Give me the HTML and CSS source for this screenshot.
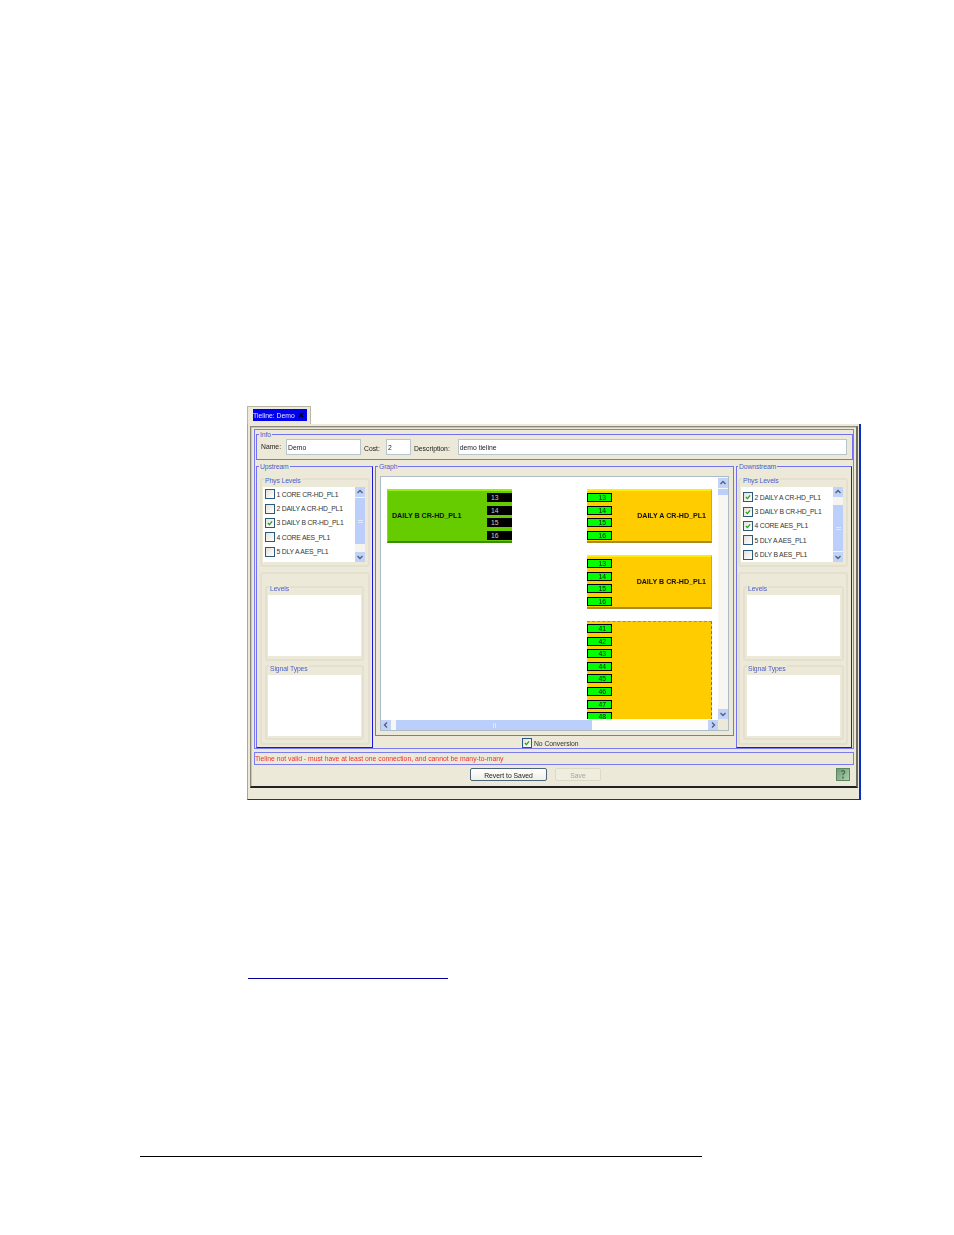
FILE: index.html
```html
<!DOCTYPE html>
<html lang="en">
<head>
<meta charset="utf-8">
<title>Tieline: Demo</title>
<link rel="stylesheet" href="styles.css">
</head>
<body>
<svg class="defs" width="0" height="0" aria-hidden="true">
  <symbol id="chk" viewBox="0 0 10 10"><path d="M2.4 5 L4.3 7 L7.6 3" fill="none" stroke="#21a121" stroke-width="1.6"/></symbol>
  <symbol id="up" viewBox="0 0 10 10"><path d="M2.5 6 L5 3.5 L7.5 6" fill="none" stroke="#4d6185" stroke-width="1.4"/></symbol>
  <symbol id="down" viewBox="0 0 10 10"><path d="M2.5 4 L5 6.5 L7.5 4" fill="none" stroke="#4d6185" stroke-width="1.4"/></symbol>
  <symbol id="left" viewBox="0 0 10 10"><path d="M6 2.5 L3.5 5 L6 7.5" fill="none" stroke="#4d6185" stroke-width="1.4"/></symbol>
  <symbol id="right" viewBox="0 0 10 10"><path d="M4 2.5 L6.5 5 L4 7.5" fill="none" stroke="#4d6185" stroke-width="1.4"/></symbol>
</svg>
<main class="page">
  <div class="window">
    <div class="tab"><div class="tab-label"><span>Tieline: Demo</span><svg class="tab-x" viewBox="0 0 6 6"><path d="M1 1 L5 5 M5 1 L1 5" stroke="#000" stroke-width="1.4"/></svg></div></div>
    <div class="frame">
      <div class="panel">
        <div class="outer">
          <section class="titled info">
            <span class="legend">Info</span>
            <label class="lab name-lab">Name:</label>
            <div class="field f-name">Demo</div>
            <label class="lab">Cost:</label>
            <div class="field f-cost">2</div>
            <label class="lab">Description:</label>
            <div class="field f-desc">demo tieline</div>
          </section>
          <div class="columns">
            <section class="titled side">
              <span class="legend">Upstream</span>
              <div class="group phys">
                <span class="glabel">Phys Levels</span>
                <div class="listwrap">
                  <ul class="list">
                    <li><span class="cb"></span>1 CORE CR-HD_PL1</li>
                    <li><span class="cb"></span>2 DAILY A CR-HD_PL1</li>
                    <li><span class="cb"><svg><use href="#chk"/></svg></span>3 DAILY B CR-HD_PL1</li>
                    <li><span class="cb"></span>4 CORE AES_PL1</li>
                    <li><span class="cb"></span>5 DLY A AES_PL1</li>
                  </ul>
                  <div class="vbar">
                    <span class="btn"><svg><use href="#up"/></svg></span>
                    <span class="thumb thumb-up"><i></i></span>
                    <span class="track"></span>
                    <span class="btn"><svg><use href="#down"/></svg></span>
                  </div>
                </div>
              </div>
              <div class="group lower">
                <div class="group sub sub-levels"><span class="glabel">Levels</span><div class="box box-l"></div></div>
                <div class="group sub sub-signal"><span class="glabel">Signal Types</span><div class="box box-s"></div></div>
              </div>
            </section>
            <div class="center">
              <section class="titled graph">
                <span class="legend">Graph</span>
                <div class="scrollpane">
                  <div class="viewport">
                    <div class="node green n1">
                      <span class="nlabel">DAILY B CR-HD_PL1</span>
                      <div class="ports"><span class="port dark">13</span><span class="port dark">14</span><span class="port dark">15</span><span class="port dark">16</span></div>
                    </div>
                    <div class="node yellow n2">
                      <div class="ports"><span class="port lit">13</span><span class="port lit">14</span><span class="port lit">15</span><span class="port lit">16</span></div>
                      <span class="nlabel">DAILY A CR-HD_PL1</span>
                    </div>
                    <div class="node yellow n3">
                      <div class="ports"><span class="port lit">13</span><span class="port lit">14</span><span class="port lit">15</span><span class="port lit">16</span></div>
                      <span class="nlabel">DAILY B CR-HD_PL1</span>
                    </div>
                    <div class="node yellow dashed n4">
                      <div class="ports"><span class="port lit">41</span><span class="port lit">42</span><span class="port lit">43</span><span class="port lit">44</span><span class="port lit">45</span><span class="port lit">46</span><span class="port lit">47</span><span class="port lit">48</span></div>
                    </div>
                  </div>
                  <div class="vbar vbar-g">
                    <span class="btn"><svg><use href="#up"/></svg></span>
                    <span class="thumb thumb-s"></span>
                    <span class="track"></span>
                    <span class="btn"><svg><use href="#down"/></svg></span>
                  </div>
                  <div class="hbar">
                    <span class="btn"><svg><use href="#left"/></svg></span>
                    <span class="htrack-a"></span>
                    <span class="hthumb"><i></i></span>
                    <span class="htrack"></span>
                    <span class="btn"><svg><use href="#right"/></svg></span>
                  </div>
                  <div class="corner"></div>
                </div>
              </section>
              <div class="noconv"><span class="cb"><svg><use href="#chk"/></svg></span>No Conversion</div>
            </div>
            <section class="titled side side-r">
              <span class="legend">Downstream</span>
              <div class="group phys">
                <span class="glabel">Phys Levels</span>
                <div class="listwrap">
                  <ul class="list list-r">
                    <li><span class="cb"><svg><use href="#chk"/></svg></span>2 DAILY A CR-HD_PL1</li>
                    <li><span class="cb"><svg><use href="#chk"/></svg></span>3 DAILY B CR-HD_PL1</li>
                    <li><span class="cb"><svg><use href="#chk"/></svg></span>4 CORE AES_PL1</li>
                    <li><span class="cb"></span>5 DLY A AES_PL1</li>
                    <li><span class="cb"></span>6 DLY B AES_PL1</li>
                  </ul>
                  <div class="vbar">
                    <span class="btn"><svg><use href="#up"/></svg></span>
                    <span class="track track-top"></span>
                    <span class="thumb thumb-dn"><i></i></span>
                    <span class="track"></span>
                    <span class="btn"><svg><use href="#down"/></svg></span>
                  </div>
                </div>
              </div>
              <div class="group lower">
                <div class="group sub sub-levels"><span class="glabel">Levels</span><div class="box box-l"></div></div>
                <div class="group sub sub-signal"><span class="glabel">Signal Types</span><div class="box box-s"></div></div>
              </div>
            </section>
          </div>
        </div>
        <div class="status">Tieline not valid - must have at least one connection, and cannot be many-to-many</div>
        <div class="actions">
          <button class="button revert" type="button">Revert to Saved</button>
          <button class="button save" type="button" disabled>Save</button>
          <span class="help"><svg viewBox="0 0 14 13"><path d="M5 3 Q7 1 9 3 Q9.5 5 7 6 L7 7.5" fill="none" stroke="#3d6b45" stroke-width="1.3"/><path d="M7 9 V11.5" stroke="#3d6b45" stroke-width="1.5"/></svg></span>
        </div>
      </div>
    </div>
  </div>
  <a class="link-line" href="#" aria-label="link"></a>
  <div class="foot-rule"></div>
</main>
</body>
</html>
```

FILE: styles.css
```css
* { box-sizing: border-box; }
html, body { margin: 0; background: #fff; }
body { font-family: "Liberation Sans", Arial, sans-serif; font-size: 6.8px; color: #222; }
.defs { position: absolute; }
.page { height: 1235px; padding-top: 406px; overflow: hidden; }

.window { width: 614px; margin-left: 247px; filter: blur(0.28px); }
.tab { width: 64px; height: 18px; background: #ece9d8; border: 1px solid #b8b6a6; border-bottom: 0; padding: 2px 3px 0 5px; }
.tab-label { height: 12px; background: #0000f0; color: #e6e6ff; display: flex; justify-content: space-between; align-items: center; padding: 0 3px 0 0; }
.tab-x { width: 6px; height: 6px; display: block; }

.frame { height: 376px; background: #ece9d8; border-left: 1px solid #a8a698; border-right: 2px solid #0a2fc0; border-bottom: 1px solid #0a2fc0; padding: 2px 2px 0 2px; }
.panel { width: 608px; height: 362px; border: 1px solid #8a887c; border-right: 2px solid #6e6c62; border-bottom: 2px solid #222; box-shadow: inset 1px 1px 0 #c8c6b8; padding: 2px 2px 0 3px; }

.outer { width: 600px; height: 320px; border: 1px solid #7c7cf2; padding: 4px 1px 0 1px; }
.titled { position: relative; border: 1px solid #7272ee; }
.legend { position: absolute; top: -4px; left: 2px; background: #ece9d8; color: #4a5fc8; padding: 0 1px; line-height: 8px; letter-spacing: -0.1px; }
.side-r .legend { left: 1px; }

.info { width: 597px; height: 26px; display: flex; align-items: center; padding: 0 0 0 4px; margin-bottom: 6px; }
.lab { color: #222; margin-top: 2px; }
.name-lab { margin-top: -2px; }
.field { height: 16px; background: #fff; border: 1px solid #b8c6cc; line-height: 16px; padding-left: 1px; color: #222; }
.f-name { width: 75px; margin: 0 3px 0 5px; }
.f-cost { width: 25px; margin: 0 3px 0 6px; }
.f-desc { width: 389px; margin-left: 8px; }

.columns { display: flex; gap: 2px; }
.side { width: 117px; height: 282px; border-right-color: #1a1ad8; border-bottom-color: #1a1ad8; padding: 11px 0 0 3px; }
.side-r { width: 116px; margin-left: 0; padding-left: 1px; }
.center { width: 359px; }

.group { position: relative; border: 2px solid #e3e0cf; border-radius: 3px; }
.glabel { position: absolute; top: -3px; left: 2px; background: #ece9d8; color: #4a5fc8; padding: 0 1px; line-height: 8px; white-space: nowrap; letter-spacing: -0.1px; }
.phys { width: 110px; height: 89px; padding: 7px 0 0 1px; }
.listwrap { display: flex; height: 75px; }
.list { list-style: none; margin: 0; padding: 0; width: 92px; height: 75px; background: #fff; }
.list li { height: 14.4px; display: flex; align-items: center; padding-left: 2px; white-space: nowrap; color: #333; letter-spacing: -0.2px; }
.list-r { padding-top: 3px; }
.cb { flex: none; width: 10px; height: 10px; margin-right: 1.5px; border: 1px solid #2d5a7c; background: linear-gradient(135deg, #e4e2d8, #fff); display: block; }
.cb svg { display: block; width: 8px; height: 8px; }

.vbar { width: 10px; height: 75px; display: flex; flex-direction: column; background: #f5f4ef; }
.btn { flex: none; display: block; width: 10px; height: 10px; background: #c3d3f8; }
.btn svg { display: block; width: 10px; height: 10px; }
.thumb { display: flex; align-items: center; justify-content: center; background: #bccffa; flex: none; }
.thumb i { display: block; width: 5px; height: 3px; border-top: 1px solid #dfe8fc; border-bottom: 1px solid #dfe8fc; }
.thumb-up { height: 46px; margin-top: 1px; }
.thumb-dn { height: 46px; }
.thumb-s { height: 6px; margin-top: 1px; }
.track { flex: 1; }
.track-top { flex: none; height: 8px; }

.lower { width: 110px; height: 173px; margin-top: 5px; padding: 12px 0 0 3px; }
.sub { width: 99px; }
.sub-levels { height: 75px; padding: 7px 0 0 1px; }
.sub-signal { height: 75px; margin-top: 4px; padding: 8px 0 0 1px; }
.box { width: 93px; background: #fff; }
.box-l { height: 61px; }
.box-s { height: 61px; }
.sub-signal .glabel { top: -2px; }
.side-r .sub { margin-left: 0; width: 101px; }
.side-r .box { margin-left: 1px; }

.graph { width: 359px; height: 270px; padding: 9px 0 0 4px; }
.scrollpane { width: 349px; height: 255px; border: 1px solid #aebcc8; display: grid; grid-template-columns: 337px 10px; grid-template-rows: 242px 11px; background: #fff; }
.viewport { position: relative; overflow: hidden; }
.vbar-g { height: 242px; width: 10px; padding-top: 1px; background: #f7f6f1; }
.hbar { display: flex; height: 10px; margin-top: 1px; background: #f7f6f1; }
.htrack-a { width: 5px; }
.hthumb { width: 196px; background: #bccffa; display: flex; align-items: center; justify-content: center; }
.hthumb i { width: 3px; height: 5px; border-left: 1px solid #dfe8fc; border-right: 1px solid #dfe8fc; }
.htrack { flex: 1; background: #fdfdfb; }
.corner { background: #ece9d8; }

.node { position: absolute; width: 125px; display: flex; justify-content: space-between; border-top: 2px solid; border-bottom: 2px solid; }
.n1 { left: 6px; top: 12px; height: 54px; }
.n2 { left: 206px; top: 12px; height: 54px; }
.n3 { left: 206px; top: 78px; height: 54px; }
.n4 { left: 206px; top: 144px; height: 130px; }
.green { background: #66cc00; border-top-color: #99ee11; border-left: 1px solid #88e000; border-bottom-color: #3c8c00; padding-left: 4px; }
.yellow { background: #ffcc00; border-top-color: #ffee00; border-right: 1px solid #d8a818; border-bottom-color: #a88a28; padding-right: 5px; }
.dashed { border-top: 1px dashed #22dd22; border-right: 1px dashed #22aa22; border-bottom: 0; }
.nlabel { align-self: center; font-weight: 700; font-size: 7.1px; color: #111; white-space: nowrap; }
.ports { display: flex; flex-direction: column; gap: 3.6px; padding-top: 2px; }
.port { display: block; width: 25px; height: 9px; line-height: 9px; }
.dark { background: #000; color: #ccc; padding-left: 4px; }
.lit { background: #00ff00; border: 1px solid #000; border-bottom-width: 1.5px; color: #111; text-align: right; padding-right: 5px; line-height: 7px; }
.n4 .ports { gap: 3.6px; padding-top: 2px; }

.noconv { height: 14px; display: flex; align-items: center; justify-content: center; padding-right: 8px; color: #333; letter-spacing: -0.02px; }

.status { width: 600px; height: 13px; margin-top: 3px; border: 1px solid #7c7cf2; color: #f03030; line-height: 12px; white-space: nowrap; }

.actions { width: 600px; height: 14px; margin-top: 3px; display: flex; align-items: flex-start; }
.button { font: inherit; height: 13px; padding: 1px 0 0; background: linear-gradient(#fff, #f0efe6); border: 1px solid #4a6478; border-radius: 2px; color: #222; }
.revert { width: 77px; margin-left: 216px; }
.save { width: 46px; margin-left: 8px; border-color: #dcd9c8; background: #efedde; color: #a8a69c; }
.help { width: 14px; height: 13px; margin-left: auto; margin-right: 4px; background: linear-gradient(135deg, #6e9a74, #aed0ae); border: 1px solid #5b8862; display: block; }
.help svg { display: block; width: 12px; height: 11px; }

.link-line { display: block; width: 200px; height: 1px; margin: 178px 0 0 248px; background: #000099; }
.foot-rule { width: 562px; height: 1px; margin: 177px 0 0 140px; background: #000; }
```
